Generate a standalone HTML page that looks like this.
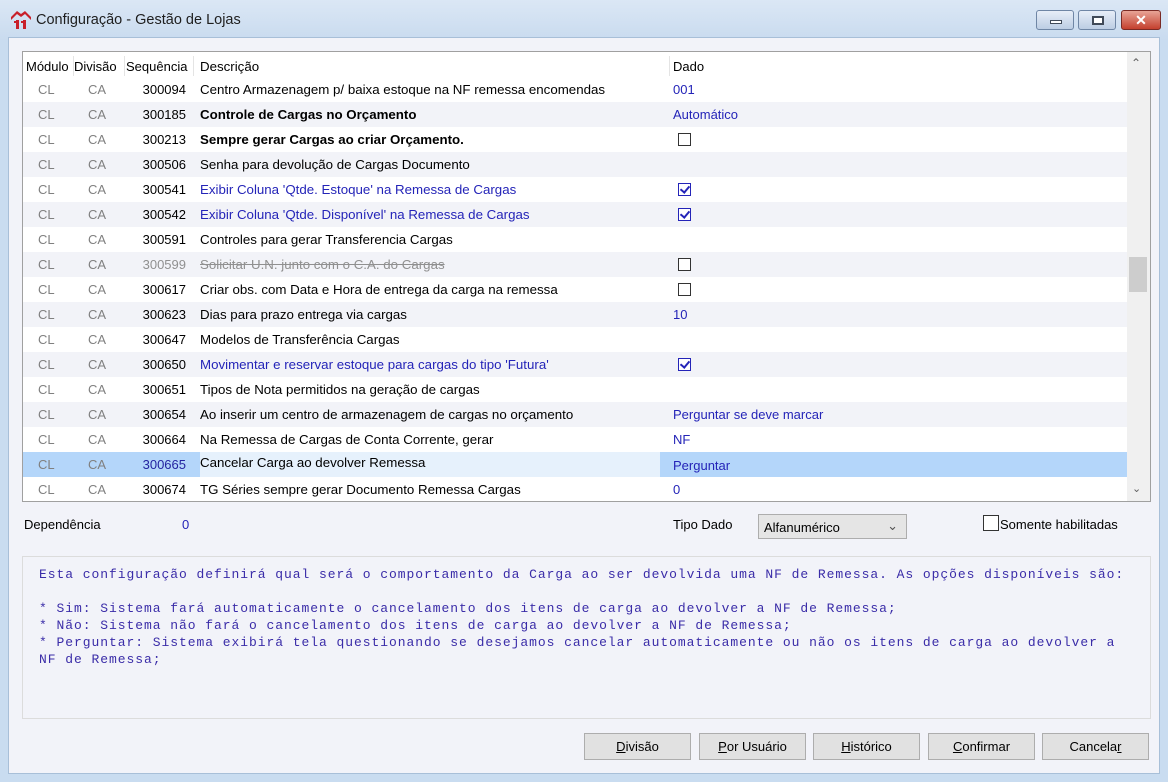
<!DOCTYPE html>
<html><head><meta charset="utf-8"><style>
*{margin:0;padding:0;box-sizing:border-box}
body{width:1168px;height:782px;overflow:hidden;background:#c9dcf0;font-family:"Liberation Sans",sans-serif;font-size:13px;position:relative}
.abs{position:absolute}
.title{left:0;top:0;width:1168px;height:40px;background:linear-gradient(#dbe7f5,#c9dbef)}
.body{left:8px;top:37px;width:1152px;height:737px;background:#f2f3f9;border:1px solid #a8bfd8}
.grid{left:22px;top:51px;width:1129px;height:451px;background:#fff;border:1px solid #a0a0a0;overflow:hidden}
.row{position:absolute;left:0;width:1104px;height:25px}
.row span{position:absolute;top:5px;white-space:nowrap}
.row .c4{font-size:13.3px}
.c1{left:15px;color:#808080}.c2{left:65px;color:#808080}.c3{left:80px;width:83px;text-align:right}
.c4{left:177px}.c5{left:650px;color:#2424b8}
.sh{background:#f2f3f8}
.cb{position:absolute;left:655px;top:6px;width:13px;height:13px;border:1px solid #333;background:#fff}
.cb.on{border-color:#2424b8}
.cb.on:after{content:"";position:absolute;left:3px;top:0px;width:4px;height:7px;border:solid #2424b8;border-width:0 2px 2px 0;transform:rotate(40deg)}
.blue{color:#2424b8}
.btn{position:absolute;top:733px;width:107px;height:27px;background:#e1e1e1;border:1px solid #adadad;text-align:center;line-height:25px;font-size:13px}
.mono{font-family:"Liberation Mono",monospace;font-size:13px;letter-spacing:0.95px;color:#3a2ca8;line-height:17px;white-space:pre}
</style></head><body>
<div class="abs title"></div>
<div class="abs" style="left:11px;top:10px;width:20px;height:20px">
<svg width="20" height="20"><path d="M0 7 L6 1 L10 4 L14 1 L20 7 L20 10 L14 4 L10 7 L6 4 L0 10Z" fill="#c8202a"/><rect x="5" y="10" width="3" height="9" fill="#c8202a"/><rect x="12" y="10" width="3" height="9" fill="#c8202a"/><rect x="3" y="11" width="3" height="2" fill="#c8202a"/><rect x="10" y="11" width="3" height="2" fill="#c8202a"/></svg></div>
<div class="abs" style="left:36px;top:12px;font-size:14.5px;color:#1e1e1e">Configuração - Gestão de Lojas</div>
<div class="abs" style="left:1036px;top:10px;width:38px;height:20px;border:1px solid #6f86a5;border-radius:3px;background:linear-gradient(#e7eef8,#bccde3)"><div class="abs" style="left:13px;top:9px;width:12px;height:4px;background:#fff;border:1px solid #404a58"></div></div>
<div class="abs" style="left:1078px;top:10px;width:38px;height:20px;border:1px solid #6f86a5;border-radius:3px;background:linear-gradient(#e7eef8,#bccde3)"><div class="abs" style="left:13px;top:5px;width:12px;height:9px;border:2px solid #404a58;background:#fff"></div></div>
<div class="abs" style="left:1121px;top:10px;width:40px;height:20px;border:1px solid #7a2a24;border-radius:3px;background:linear-gradient(#e8a496,#c4402e);color:#fff;text-align:center;font-weight:bold;font-size:14px;line-height:18px">✕</div>
<div class="abs body"></div>
<div class="abs grid">
<div class="row" style="top:2px"><span style="left:3px">Módulo</span><span style="left:51px">Divisão</span><span style="left:103px">Sequência</span><span class="c4">Descrição</span><span style="left:650px">Dado</span></div>
<div style="position:absolute;left:50px;top:4px;width:1px;height:20px;background:#e4e4e4"></div>
<div style="position:absolute;left:101px;top:4px;width:1px;height:20px;background:#e4e4e4"></div>
<div style="position:absolute;left:170px;top:4px;width:1px;height:20px;background:#e4e4e4"></div>
<div style="position:absolute;left:646px;top:4px;width:1px;height:20px;background:#e4e4e4"></div>

<div class="row" style="top:25px"><span class="c1">CL</span><span class="c2">CA</span><span class="c3">300094</span><span class="c4">Centro Armazenagem p/ baixa estoque na NF remessa encomendas</span><span class="c5">001</span></div>
<div class="row sh" style="top:50px"><span class="c1">CL</span><span class="c2">CA</span><span class="c3">300185</span><span class="c4" style="font-weight:bold">Controle de Cargas no Orçamento</span><span class="c5">Automático</span></div>
<div class="row" style="top:75px"><span class="c1">CL</span><span class="c2">CA</span><span class="c3">300213</span><span class="c4" style="font-weight:bold">Sempre gerar Cargas ao criar Orçamento.</span><i class="cb"></i></div>
<div class="row sh" style="top:100px"><span class="c1">CL</span><span class="c2">CA</span><span class="c3">300506</span><span class="c4">Senha para devolução de Cargas Documento</span></div>
<div class="row" style="top:125px"><span class="c1">CL</span><span class="c2">CA</span><span class="c3">300541</span><span class="c4 blue">Exibir Coluna 'Qtde. Estoque' na Remessa de Cargas</span><i class="cb on"></i></div>
<div class="row sh" style="top:150px"><span class="c1">CL</span><span class="c2">CA</span><span class="c3">300542</span><span class="c4 blue">Exibir Coluna 'Qtde. Disponível' na Remessa de Cargas</span><i class="cb on"></i></div>
<div class="row" style="top:175px"><span class="c1">CL</span><span class="c2">CA</span><span class="c3">300591</span><span class="c4">Controles para gerar Transferencia Cargas</span></div>
<div class="row sh" style="top:200px"><span class="c1">CL</span><span class="c2">CA</span><span class="c3" style="color:#909090">300599</span><span class="c4" style="color:#909090;text-decoration:line-through">Solicitar U.N. junto com o C.A. do Cargas</span><i class="cb"></i></div>
<div class="row" style="top:225px"><span class="c1">CL</span><span class="c2">CA</span><span class="c3">300617</span><span class="c4">Criar obs. com Data e Hora de entrega da carga na remessa</span><i class="cb"></i></div>
<div class="row sh" style="top:250px"><span class="c1">CL</span><span class="c2">CA</span><span class="c3">300623</span><span class="c4">Dias para prazo entrega via cargas</span><span class="c5">10</span></div>
<div class="row" style="top:275px"><span class="c1">CL</span><span class="c2">CA</span><span class="c3">300647</span><span class="c4">Modelos de Transferência Cargas</span></div>
<div class="row sh" style="top:300px"><span class="c1">CL</span><span class="c2">CA</span><span class="c3">300650</span><span class="c4 blue">Movimentar e reservar estoque para cargas do tipo 'Futura'</span><i class="cb on"></i></div>
<div class="row" style="top:325px"><span class="c1">CL</span><span class="c2">CA</span><span class="c3">300651</span><span class="c4">Tipos de Nota permitidos na geração de cargas</span></div>
<div class="row sh" style="top:350px"><span class="c1">CL</span><span class="c2">CA</span><span class="c3">300654</span><span class="c4">Ao inserir um centro de armazenagem de cargas no orçamento</span><span class="c5">Perguntar se deve marcar</span></div>
<div class="row" style="top:375px"><span class="c1">CL</span><span class="c2">CA</span><span class="c3">300664</span><span class="c4">Na Remessa de Cargas de Conta Corrente, gerar</span><span class="c5">NF</span></div>
<div class="row" style="top:400px;background:#b4d6fa"><div style="position:absolute;left:177px;top:0;width:460px;height:25px;background:#e6f1fc"></div><span class="c1">CL</span><span class="c2">CA</span><span class="c3" style="color:#2424a0">300665</span><span class="c4" style="top:3px">Cancelar Carga ao devolver Remessa</span><span class="c5" style="top:6px">Perguntar</span></div>
<div class="row" style="top:425px"><span class="c1">CL</span><span class="c2">CA</span><span class="c3">300674</span><span class="c4">TG Séries sempre gerar Documento Remessa Cargas</span><span class="c5">0</span></div>
<div style="position:absolute;left:1104px;top:0;width:23px;height:449px;background:#f0f0f0"></div>
<div style="position:absolute;left:1108px;top:4px;color:#606060;font-size:12px">&#8963;</div>
<div style="position:absolute;left:1106px;top:205px;width:18px;height:35px;background:#cdcdcd"></div>
<div style="position:absolute;left:1109px;top:430px;color:#606060;font-size:11px">&#8964;</div>
</div>
<div class="abs" style="left:24px;top:517px">Dependência</div>
<div class="abs blue" style="left:182px;top:517px">0</div>
<div class="abs" style="left:673px;top:517px">Tipo Dado</div>
<div class="abs" style="left:758px;top:514px;width:149px;height:25px;border:1px solid #adadad;background:#e5e5e5;padding:5px 0 0 5px">Alfanumérico<span style="position:absolute;right:8px;top:3px;color:#555">&#8964;</span></div>
<div class="abs" style="left:983px;top:515px;width:16px;height:16px;border:1px solid #333;background:#fff"></div>
<div class="abs" style="left:1000px;top:517px">Somente habilitadas</div>
<div class="abs" style="left:22px;top:556px;width:1129px;height:163px;border:1px solid #dcdcdc;background:#f2f3f9"></div>
<div class="abs mono" style="left:39px;top:566px">Esta configuração definirá qual será o comportamento da Carga ao ser devolvida uma NF de Remessa. As opções disponíveis são:

* Sim: Sistema fará automaticamente o cancelamento dos itens de carga ao devolver a NF de Remessa;
* Não: Sistema não fará o cancelamento dos itens de carga ao devolver a NF de Remessa;
* Perguntar: Sistema exibirá tela questionando se desejamos cancelar automaticamente ou não os itens de carga ao devolver a
NF de Remessa;</div>
<div class="btn" style="left:584px"><u>D</u>ivisão</div>
<div class="btn" style="left:699px"><u>P</u>or Usuário</div>
<div class="btn" style="left:813px"><u>H</u>istórico</div>
<div class="btn" style="left:928px"><u>C</u>onfirmar</div>
<div class="btn" style="left:1042px">Cancela<u>r</u></div>
</body></html>
